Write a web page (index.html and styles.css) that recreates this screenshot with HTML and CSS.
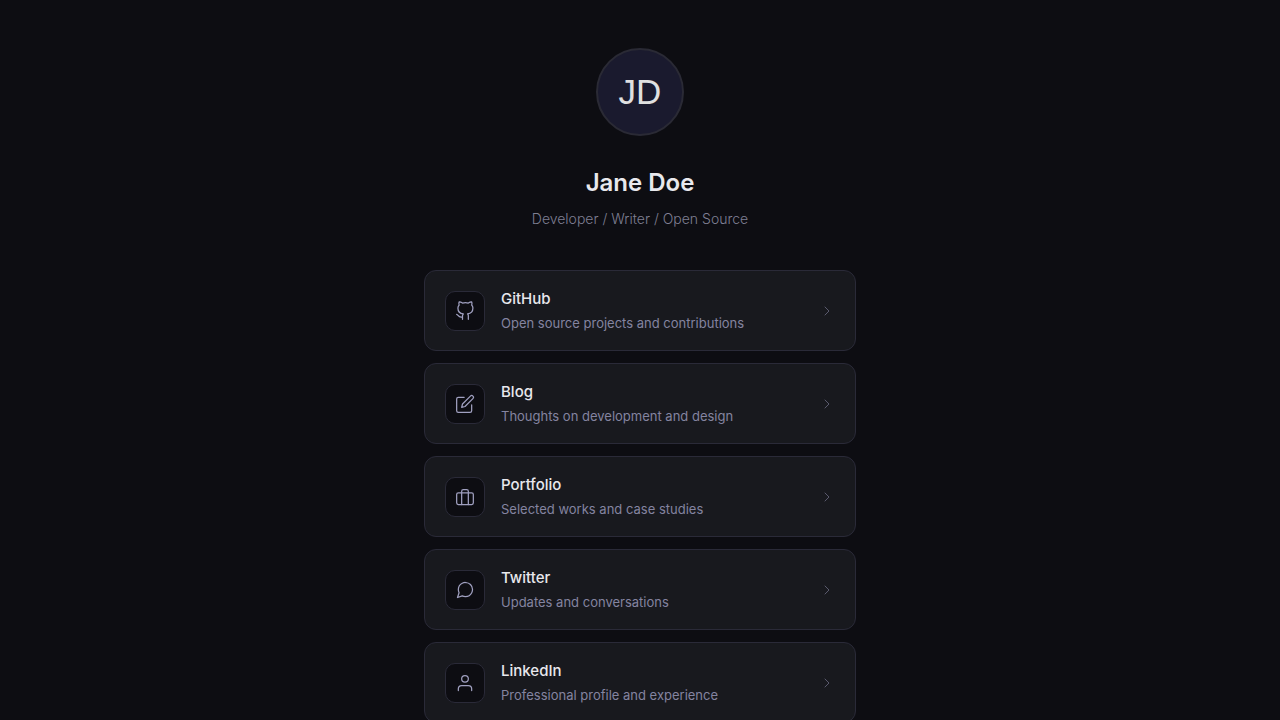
FILE: index.html
```
<!DOCTYPE html>
<html lang="en">

<head>
    <meta charset="UTF-8">
    <meta name="viewport" content="width=device-width, initial-scale=1.0">
    <title>Jane Doe</title>
    <link rel="stylesheet" href="styles.css">
</head>

<body>
    <main class="container">
        <header class="profile">
            <div class="avatar">JD</div>
            <h1 class="name">Jane Doe</h1>
            <p class="bio">Developer / Writer / Open Source</p>
        </header>

        <nav class="links">
            <a class="link-card" href="#github">
                <span class="link-icon">
                    <svg viewBox="0 0 24 24">
                        <path d="M9 19c-5 1.5-5-2.5-7-3m14 6v-3.87a3.37 3.37 0 0 0-.94-2.61c3.14-.35 6.44-1.54 6.44-7A5.44 5.44 0 0 0 20 4.77 5.07 5.07 0 0 0 19.91 1S18.73.65 16 2.48a13.38 13.38 0 0 0-7 0C6.27.65 5.09 1 5.09 1A5.07 5.07 0 0 0 5 4.77a5.44 5.44 0 0 0-1.5 3.78c0 5.42 3.3 6.61 6.44 7A3.37 3.37 0 0 0 9 18.13V22" />
                    </svg>
                </span>
                <span class="link-text">
                    <span class="link-title">GitHub</span>
                    <span class="link-desc">Open source projects and contributions</span>
                </span>
                <svg class="arrow" viewBox="0 0 24 24"><polyline points="9 18 15 12 9 6" /></svg>
            </a>

            <a class="link-card" href="#blog">
                <span class="link-icon">
                    <svg viewBox="0 0 24 24">
                        <path d="M11 4H4a2 2 0 0 0-2 2v14a2 2 0 0 0 2 2h14a2 2 0 0 0 2-2v-7" />
                        <path d="M18.5 2.5a2.121 2.121 0 0 1 3 3L12 15l-4 1 1-4 9.5-9.5z" />
                    </svg>
                </span>
                <span class="link-text">
                    <span class="link-title">Blog</span>
                    <span class="link-desc">Thoughts on development and design</span>
                </span>
                <svg class="arrow" viewBox="0 0 24 24"><polyline points="9 18 15 12 9 6" /></svg>
            </a>

            <a class="link-card" href="#portfolio">
                <span class="link-icon">
                    <svg viewBox="0 0 24 24">
                        <rect x="2" y="7" width="20" height="14" rx="2" ry="2" />
                        <path d="M16 21V5a2 2 0 0 0-2-2h-4a2 2 0 0 0-2 2v16" />
                    </svg>
                </span>
                <span class="link-text">
                    <span class="link-title">Portfolio</span>
                    <span class="link-desc">Selected works and case studies</span>
                </span>
                <svg class="arrow" viewBox="0 0 24 24"><polyline points="9 18 15 12 9 6" /></svg>
            </a>

            <a class="link-card" href="#twitter">
                <span class="link-icon">
                    <svg viewBox="0 0 24 24">
                        <path d="M21 11.5a8.38 8.38 0 0 1-.9 3.8 8.5 8.5 0 0 1-7.6 4.7 8.38 8.38 0 0 1-3.8-.9L3 21l1.9-5.7a8.38 8.38 0 0 1-.9-3.8 8.5 8.5 0 0 1 4.7-7.6 8.38 8.38 0 0 1 3.8-.9h.5a8.48 8.48 0 0 1 8 8v.5z" />
                    </svg>
                </span>
                <span class="link-text">
                    <span class="link-title">Twitter</span>
                    <span class="link-desc">Updates and conversations</span>
                </span>
                <svg class="arrow" viewBox="0 0 24 24"><polyline points="9 18 15 12 9 6" /></svg>
            </a>

            <a class="link-card" href="#linkedin">
                <span class="link-icon">
                    <svg viewBox="0 0 24 24">
                        <path d="M20 21v-2a4 4 0 0 0-4-4H8a4 4 0 0 0-4 4v2" />
                        <circle cx="12" cy="7" r="4" />
                    </svg>
                </span>
                <span class="link-text">
                    <span class="link-title">LinkedIn</span>
                    <span class="link-desc">Professional profile and experience</span>
                </span>
                <svg class="arrow" viewBox="0 0 24 24"><polyline points="9 18 15 12 9 6" /></svg>
            </a>
        </nav>
    </main>
</body>

</html>
```

FILE: styles.css
```
* {
    margin: 0;
    padding: 0;
    box-sizing: border-box;
}

body {
    background: #0d0d12;
    color: #e8e8ed;
    font-family: Inter, "Liberation Sans", sans-serif;
}

svg {
    fill: none;
    stroke: currentColor;
    stroke-width: 1.5;
    stroke-linecap: round;
    stroke-linejoin: round;
}

.container {
    max-width: 480px;
    margin: 0 auto;
    padding: 48px 24px;
}

/* Profile */
.profile {
    text-align: center;
    margin-bottom: 40px;
}

.avatar {
    display: flex;
    align-items: center;
    justify-content: center;
    width: 88px;
    height: 88px;
    margin: 0 auto 28px;
    border: 2px solid #2a2a35;
    border-radius: 50%;
    background: #1a1a2e;
    color: #e0e0e0;
    font-family: "Liberation Sans", Arial, sans-serif;
    font-size: 35px;
}

.name {
    margin-bottom: 6px;
    font-size: 24px;
    font-weight: 600;
    line-height: 38px;
}

.bio {
    color: #7f7f92;
    font-size: 14px;
    font-weight: 300;
    line-height: 22px;
}

/* Links */
.links {
    display: flex;
    flex-direction: column;
    gap: 12px;
}

.link-card {
    display: flex;
    align-items: center;
    gap: 16px;
    padding: 16px 20px;
    border: 1px solid #2a2a38;
    border-radius: 12px;
    background: #18191e;
    color: inherit;
    text-decoration: none;
}

.link-card:hover {
    border-color: #3d3d4d;
}

.link-icon {
    display: flex;
    flex-shrink: 0;
    align-items: center;
    justify-content: center;
    width: 40px;
    height: 40px;
    border: 1px solid #2a2a38;
    border-radius: 10px;
    background: #0d0d12;
    color: #a0a0c0;
}

.link-icon svg {
    width: 20px;
    height: 20px;
}

.link-text {
    flex: 1;
    min-width: 0;
}

.link-title,
.link-desc {
    display: block;
}

.link-title {
    margin-bottom: 2px;
    font-size: 15px;
    font-weight: 500;
    line-height: 24px;
}

.link-desc {
    color: #8484a0;
    font-size: 13px;
    line-height: 21px;
}

.arrow {
    flex-shrink: 0;
    width: 16px;
    height: 16px;
    color: #5a5a6e;
}
```
